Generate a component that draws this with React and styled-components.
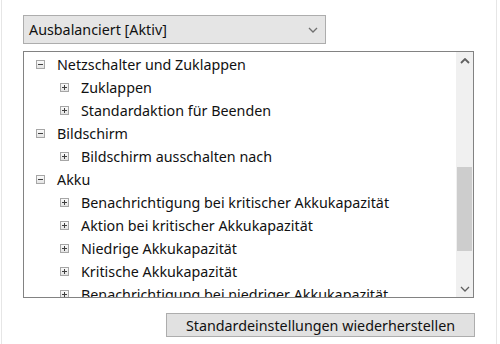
import React from "react";
import styled, { createGlobalStyle } from "styled-components";

const Global = createGlobalStyle`
  html, body { margin: 0; padding: 0; background: #fff; }
  body { font-family: "Noto Sans", "Open Sans", sans-serif; color: #111; }
`;

const Frame = styled.div`
  box-sizing: border-box;
  width: 496px;
  height: 344px;
  margin-left: 1px;
  border-left: 1px solid #e6e6e6;
  border-right: 1px solid #e6e6e6;
  padding: 15px 0 0 21px;
  display: flex;
  flex-direction: column;
  align-items: flex-start;
`;

const Select = styled.div`
  box-sizing: border-box;
  width: 303px;
  height: 29px;
  background: #e5e5e5;
  border: 1px solid #adadad;
  display: flex;
  align-items: center;
  justify-content: space-between;
  padding: 0 7px 0 5px;
  font-size: 14.3px;
`;

const ListBox = styled.div`
  box-sizing: border-box;
  margin-top: 7px;
  width: 451px;
  height: 247px;
  border: 1px solid #828282;
  display: flex;
  overflow: hidden;
`;

const Tree = styled.div`
  flex: 1;
  padding-top: 1px;
  overflow: hidden;
`;

const Row = styled.div`
  height: 23px;
  display: flex;
  align-items: center;
  gap: 12px;
  padding-left: ${(p) => 12 + p.$level * 24}px;
  font-size: 14.3px;
  white-space: nowrap;
`;

const Toggle = styled.span`
  box-sizing: border-box;
  flex: none;
  width: 9px;
  height: 9px;
  border: 1px solid #a6a6a6;
  background: linear-gradient(#fafafa, #e4e4e4);
  position: relative;
  &::before {
    content: "";
    position: absolute;
    left: 1px;
    top: 3px;
    width: 5px;
    height: 1px;
    background: #404040;
  }
  &::after {
    content: "";
    display: ${(p) => (p.$open ? "none" : "block")};
    position: absolute;
    left: 3px;
    top: 1px;
    width: 1px;
    height: 5px;
    background: #404040;
  }
`;

const ScrollBar = styled.div`
  flex: none;
  width: 17px;
  background: #f0f0f0;
  display: flex;
  flex-direction: column;
  align-items: stretch;
`;

const Arrow = styled.div`
  height: 17px;
  display: flex;
  align-items: center;
  justify-content: center;
`;

const Track = styled.div`
  flex: 1;
  display: flex;
  flex-direction: column;
  padding-top: ${(p) => p.$offset}px;
`;

const Thumb = styled.div`
  height: ${(p) => p.$size}px;
  margin: 0 1px;
  background: #cdcdcd;
`;

const Button = styled.button`
  box-sizing: border-box;
  margin-top: 15px;
  margin-left: 143px;
  width: 309px;
  height: 24px;
  background: #e1e1e1;
  border: 1px solid #adadad;
  font-family: inherit;
  font-size: 14.3px;
  color: #111;
  padding: 0;
`;

const Chevron = ({ up, color = "#606060", w = 10 }) => (
  <svg width={w} height="6" viewBox="0 0 10 6">
    <path
      d={up ? "M1 5 L5 1 L9 5" : "M1 1 L5 5 L9 1"}
      fill="none"
      stroke={color}
      strokeWidth={up ? 1.8 : 1.3}
    />
  </svg>
);

const items = [
  { level: 0, open: true, text: "Netzschalter und Zuklappen" },
  { level: 1, text: "Zuklappen" },
  { level: 1, text: "Standardaktion für Beenden" },
  { level: 0, open: true, text: "Bildschirm" },
  { level: 1, text: "Bildschirm ausschalten nach" },
  { level: 0, open: true, text: "Akku" },
  { level: 1, text: "Benachrichtigung bei kritischer Akkukapazität" },
  { level: 1, text: "Aktion bei kritischer Akkukapazität" },
  { level: 1, text: "Niedrige Akkukapazität" },
  { level: 1, text: "Kritische Akkukapazität" },
  { level: 1, text: "Benachrichtigung bei niedriger Akkukapazität" },
];

export default function App() {
  return (
    <>
      <Global />
      <Frame>
        <Select>
          <span>Ausbalanciert [Aktiv]</span>
          <Chevron color="#707070" w={10} />
        </Select>
        <ListBox>
          <Tree>
            {items.map((it, i) => (
              <Row key={i} $level={it.level}>
                <Toggle $open={it.open} />
                <span>{it.text}</span>
              </Row>
            ))}
          </Tree>
          <ScrollBar>
            <Arrow>
              <Chevron up />
            </Arrow>
            <Track $offset={98}>
              <Thumb $size={84} />
            </Track>
            <Arrow>
              <Chevron />
            </Arrow>
          </ScrollBar>
        </ListBox>
        <Button>Standardeinstellungen wiederherstellen</Button>
      </Frame>
    </>
  );
}
